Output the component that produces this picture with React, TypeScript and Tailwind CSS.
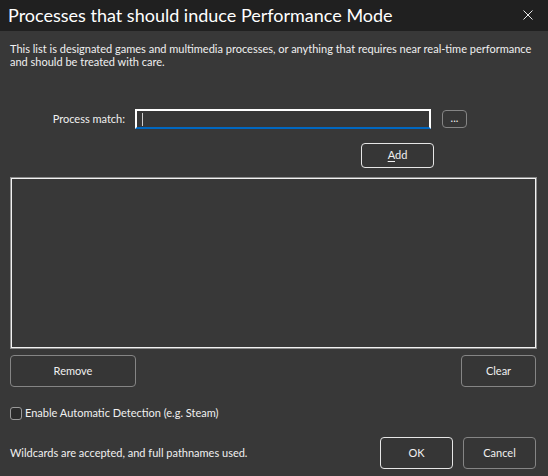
import React from "react";

const font = { fontFamily: 'Lato, "Open Sans", sans-serif' };

function Btn({
  children,
  width,
  primary = false,
}: {
  children: React.ReactNode;
  width: string;
  primary?: boolean;
}) {
  return (
    <button
      type="button"
      className={`${width} h-full rounded-[4px] border bg-[#363636] text-[11px] text-[#f0f0f0] ${
        primary ? "border-[#e6e6e6]" : "border-[#858585]"
      }`}
    >
      {children}
    </button>
  );
}

export default function App() {
  return (
    <div className="flex h-[476px] w-[548px] flex-col bg-[#383838] text-[#f0f0f0]" style={font}>
      {/* caption */}
      <div className="flex h-[31px] shrink-0 items-center justify-between bg-[#202020] pl-[8px] pr-[15px]">
        <span className="pb-[2px] text-[18px] leading-none text-white">
          Processes that should induce Performance Mode
        </span>
        <svg viewBox="0 0 10 10" className="mb-[2px] h-[10px] w-[10px]" stroke="#e8e8e8" strokeWidth="1">
          <path d="M0.5 0.5 9.5 9.5M9.5 0.5 0.5 9.5" />
        </svg>
      </div>

      <div className="flex flex-col px-[10px]">
        <p className="pt-[11px] text-[11px] leading-[13px]">
          This list is designated games and multimedia processes, or anything that requires near real-time performance
          and should be treated with care.
        </p>

        {/* process match row */}
        <div className="mt-[41px] flex h-[20px] items-center">
          <label className="w-[115px] text-right text-[11px]">Process match:</label>
          <div className="ml-[10px] flex h-[20px] w-[296px] items-center border-2 border-white border-b-[#0067c0] bg-[#363636] pl-[5px]">
            <span className="h-[13px] w-px bg-[#cfcfcf]" />
          </div>
          <button
            type="button"
            className="ml-[11px] flex h-[18px] w-[25px] items-center justify-center rounded-[4px] border border-[#858585] bg-[#363636] pb-[4px] text-[11px] leading-none"
          >
            ...
          </button>
        </div>

        <div className="mt-[12px] flex h-[25px]">
          <div className="ml-[351px] h-full">
            <Btn width="w-[73px]" primary>
              <span className="underline underline-offset-2">A</span>dd
            </Btn>
          </div>
        </div>

        {/* list */}
        <div className="mt-[11px] h-[172px] w-[527px] border border-[#8c8c8c]">
          <div className="h-full w-full border border-[#f2f2f2] bg-[#383838]" />
        </div>

        <div className="mt-[6px] flex h-[32px] justify-between pr-[2px]">
          <Btn width="w-[126px]">Remove</Btn>
          <Btn width="w-[75px]">Clear</Btn>
        </div>

        <label className="mt-[20px] flex h-[13px] items-center gap-[3px] text-[11px]">
          <span className="h-[13px] w-[12px] rounded-[3px] border border-[#9a9a9a] bg-[#2c2c2c]" />
          Enable Automatic Detection (e.g. Steam)
        </label>

        <div className="mt-[17px] flex h-[32px] items-center pr-[2px]">
          <span className="flex-1 text-[11px]">Wildcards are accepted, and full pathnames used.</span>
          <div className="flex h-full gap-[10px]">
            <Btn width="w-[73px]" primary>
              OK
            </Btn>
            <Btn width="w-[73px]">Cancel</Btn>
          </div>
        </div>
      </div>
    </div>
  );
}
